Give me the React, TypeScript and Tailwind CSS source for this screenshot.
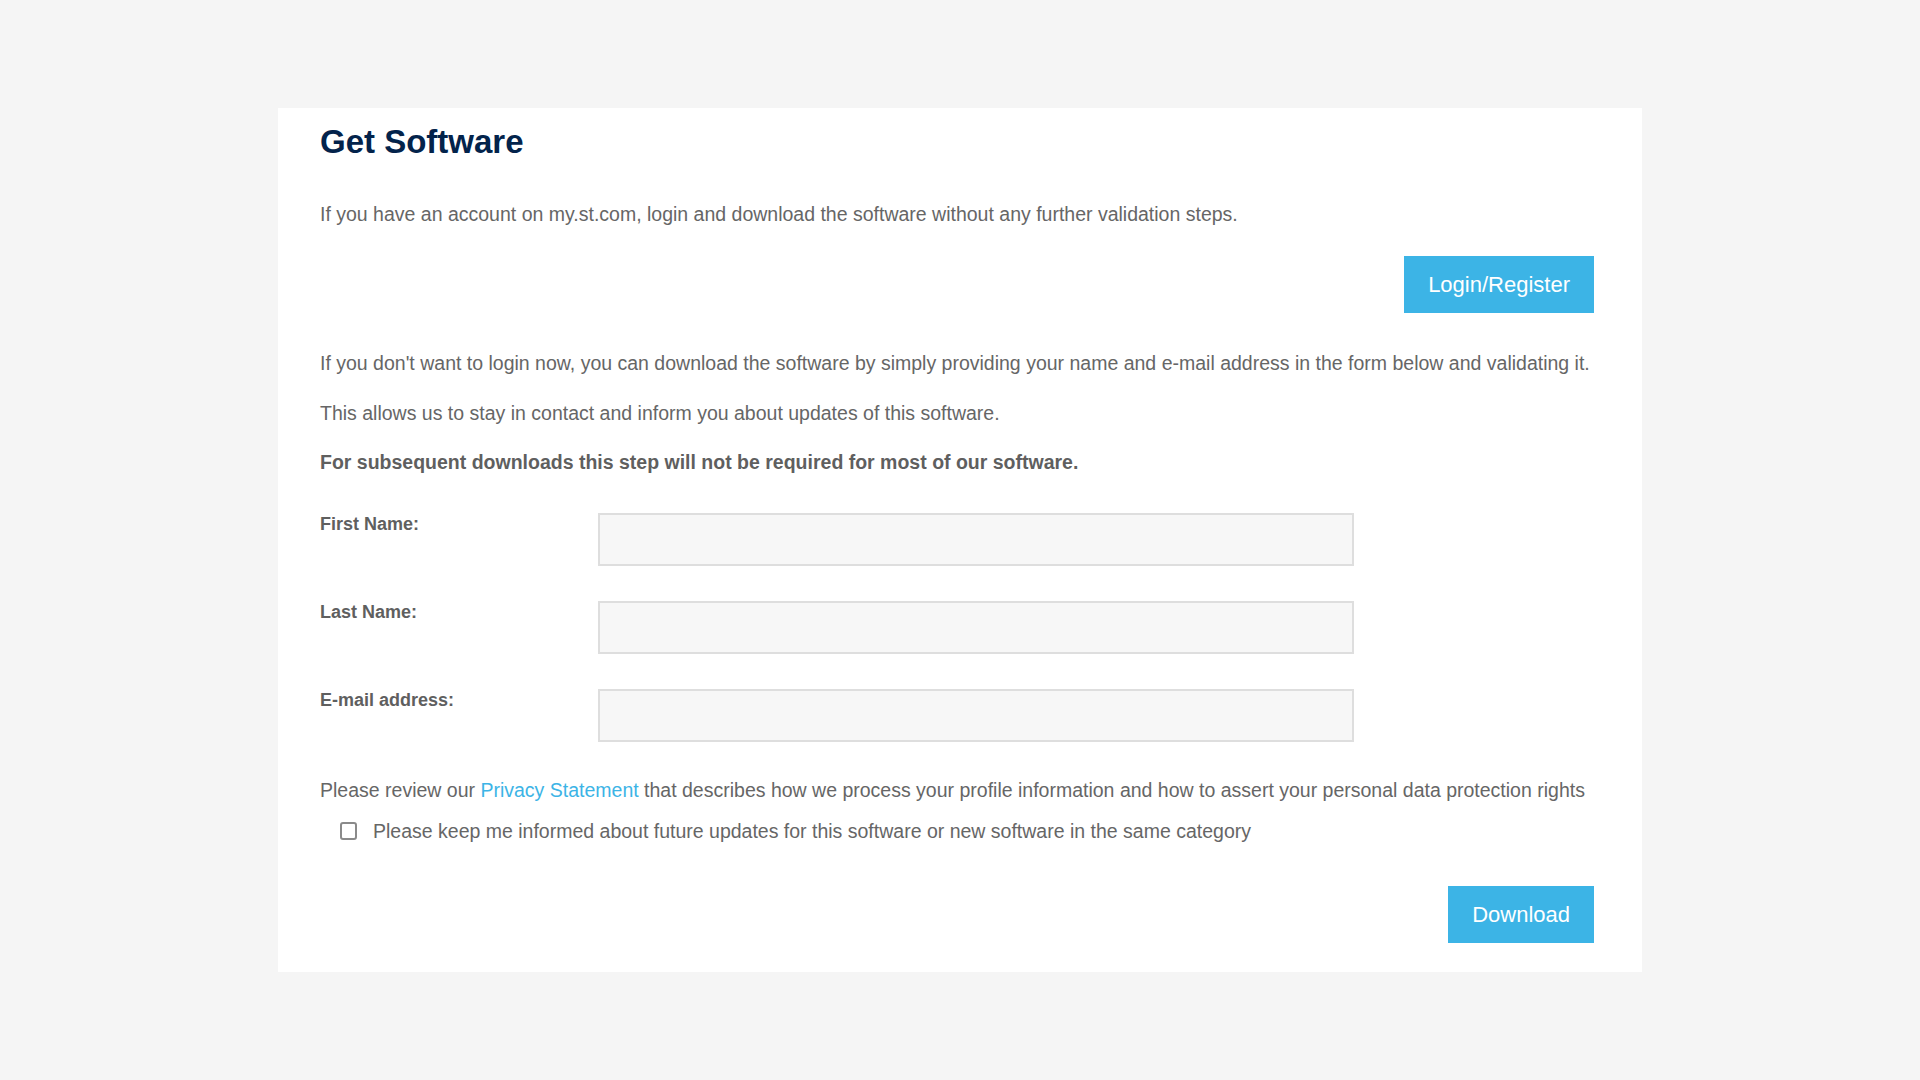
export default function App() {
  const font = { fontFamily: '"Liberation Sans", Arial, sans-serif' };
  return (
    <div className="min-h-[1080px] w-full bg-[#f5f5f5] pt-[108px]" style={font}>
      <div className="mx-auto w-[1364px] bg-white pl-[42px] pr-[48px] pt-[14px] pb-[29px]">
        <h1 className="text-[33px] leading-[40px] font-bold text-[#03234b]">Get Software</h1>
        <p className="mt-[40px] text-[19.5px] leading-[24px] text-[#666666]">
          If you have an account on my.st.com, login and download the software without any further validation steps.
        </p>
        <div className="mt-[30px] flex justify-end">
          <button className="h-[57px] bg-[#3cb4e6] px-[24px] text-[22px] text-white">Login/Register</button>
        </div>
        <p className="mt-[38px] text-[19.5px] leading-[24px] text-[#666666]">
          If you don't want to login now, you can download the software by simply providing your name and e-mail address in the form below and validating it.
        </p>
        <p className="mt-[26px] text-[19.5px] leading-[24px] text-[#666666]">
          This allows us to stay in contact and inform you about updates of this software.
        </p>
        <p className="mt-[25px] text-[19.5px] leading-[24px] font-bold text-[#5f5f5f]">
          For subsequent downloads this step will not be required for most of our software.
        </p>
        <div className="mt-[35px] flex flex-col gap-[31px]">
          {["First Name:", "Last Name:", "E-mail address:"].map((l) => (
            <div key={l} className="flex items-start">
              <label className="w-[278px] pt-[3px] text-[18px] leading-[24px] font-bold text-[#5f5f5f]">{l}</label>
              <input className="mt-[4px] h-[53px] w-[756px] border-2 border-[#dedede] bg-[#f7f7f7] outline-none" />
            </div>
          ))}
        </div>
        <p className="mt-[36px] text-[19.5px] leading-[24px] text-[#666666]">
          Please review our <a className="text-[#3cb4e6]">Privacy Statement</a> that describes how we process your profile information and how to assert your personal data protection rights
        </p>
        <label className="mt-[17px] flex items-center pl-[20px] text-[19.5px] leading-[24px] text-[#666666]">
          <span className="h-[18px] w-[17px] rounded-[3px] border-2 border-[#8a8a8a] bg-white" />
          <span className="ml-[16px]">Please keep me informed about future updates for this software or new software in the same category</span>
        </label>
        <div className="mt-[43px] flex justify-end">
          <button className="h-[57px] bg-[#3cb4e6] px-[24px] text-[22px] text-white">Download</button>
        </div>
      </div>
    </div>
  );
}
